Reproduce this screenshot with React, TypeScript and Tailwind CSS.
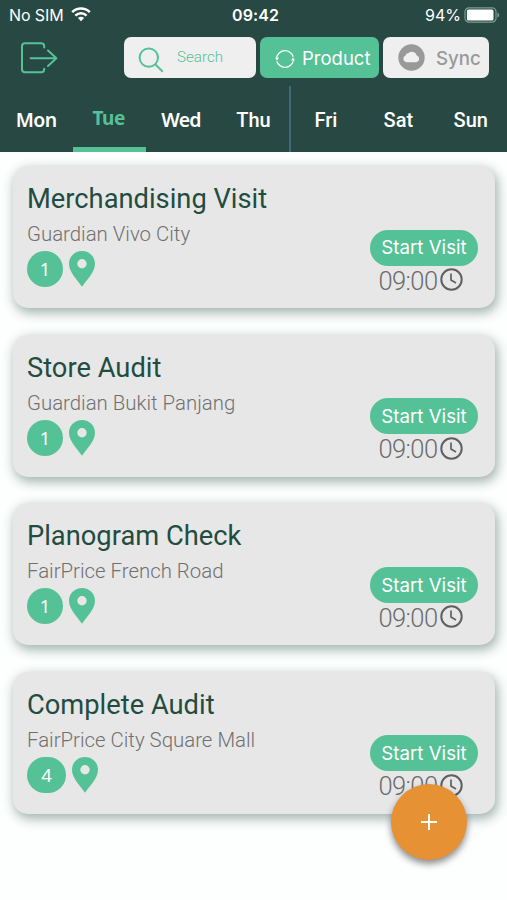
import React from "react";

const days = [
  { name: "Mon", style: "font-['Noto_Sans'] font-semibold text-[19.5px] tracking-[-0.6px] text-white" },
  { name: "Tue", style: "font-['Noto_Sans'] font-bold text-[19px] tracking-[-0.4px] text-[#55c197]" },
  { name: "Wed", style: "font-['Noto_Sans'] font-semibold text-[19.5px] tracking-[-0.8px] text-white" },
  { name: "Thu", style: "font-['Roboto'] font-medium text-[20px] text-white" },
  { name: "Fri", style: "font-['Roboto'] font-medium text-[20px] text-white" },
  { name: "Sat", style: "font-['Roboto'] font-medium text-[20px] text-white" },
  { name: "Sun", style: "font-['Roboto'] font-medium text-[20px] text-white" },
];

const visits = [
  { title: "Merchandising Visit", store: "Guardian Vivo City", count: 1 },
  { title: "Store Audit", store: "Guardian Bukit Panjang", count: 1 },
  { title: "Planogram Check", store: "FairPrice French Road", count: 1 },
  { title: "Complete Audit", store: "FairPrice City Square Mall", count: 4 },
];

const WifiIcon = () => (
  <svg className="mb-0.5 ml-[7px] h-[15px] w-5" viewBox="0 0 20 15" fill="none" stroke="white">
    <path d="M1.2 5.2a12.6 12.6 0 0 1 17.6 0" strokeWidth="2.5" />
    <path d="M4.4 8.6a8 8 0 0 1 11.2 0" strokeWidth="2.4" />
    <path d="M10 14.2 6.9 11.1a4.4 4.4 0 0 1 6.2 0z" fill="white" stroke="none" />
  </svg>
);

const BatteryIcon = () => (
  <svg className="ml-[3px] h-4 w-9" viewBox="0 0 36 16">
    <rect x="1" y="0.8" width="31" height="14.4" rx="4" fill="none" stroke="#7d9b92" strokeWidth="1.2" />
    <rect x="2.9" y="2.6" width="26.6" height="10.8" rx="1.5" fill="white" />
    <path d="M33.4 5.4v5.2c2.4-.9 2.4-4.3 0-5.2z" fill="#7d9b92" />
  </svg>
);

const LogoutIcon = () => (
  <svg
    className="h-8 w-[38px]"
    viewBox="0 0 38 32"
    fill="none"
    stroke="#55c197"
    strokeWidth="2"
    strokeLinecap="round"
    strokeLinejoin="round"
  >
    <path d="M24.2 5.6V4.2Q24.2 1.2 21.2 1.2H5Q2 1.2 2 4.2V27.2Q2 30.2 5 30.2H21.2Q24.2 30.2 24.2 27.2V26.8" />
    <path d="M10.5 16.2H36M28 8.4l8.4 7.8-8.4 7.8" />
  </svg>
);

const SearchIcon = () => (
  <svg className="h-[26px] w-[26px]" viewBox="0 0 26 26" fill="none" stroke="#55c197" strokeWidth="2">
    <circle cx="10.8" cy="10.6" r="9.2" />
    <path d="m17.2 17.2 7.6 7.6" />
  </svg>
);

const RefreshIcon = () => (
  <svg className="mt-0.5 h-5 w-5" viewBox="0 0 20 20" fill="none" stroke="white" strokeWidth="1.3">
    <path d="M1.6 9a8.5 8.5 0 0 1 16.6-1.2M18.4 11a8.5 8.5 0 0 1-16.6 1.2" />
    <path d="M0 8.8h4L2 11.6zM16 11.2h4L18 8.4z" fill="white" stroke="none" />
  </svg>
);

const CloudIcon = () => (
  <svg className="h-[27px] w-[27px]" viewBox="0 0 27 27">
    <circle cx="13.5" cy="13.5" r="13.2" fill="#999999" />
    <path
      d="M8.4 18.2a3.5 3.5 0 0 1-.9-6.7 3.2 3.2 0 0 1 3-2.4 5 5 0 0 1 8.3 2.5 3.4 3.4 0 0 1-.4 6.6z"
      fill="#f0f0f0"
    />
  </svg>
);

const PinIcon = () => (
  <svg className="ml-1.5 h-9 w-[26px]" viewBox="0 0 26 36">
    <path
      fillRule="evenodd"
      d="M13 0C5.6 0 0 5.6 0 12.8 0 21.5 8.5 29 13 35.8 17.5 29 26 21.5 26 12.8 26 5.6 20.4 0 13 0zM13 8.1a4.7 4.7 0 1 1 0 9.4 4.7 4.7 0 0 1 0-9.4z"
      fill="#55c197"
    />
  </svg>
);

const ClockIcon = () => (
  <svg className="mb-0.5 ml-[3px] h-[23px] w-[23px]" viewBox="0 0 23 23" fill="none" stroke="#606060">
    <circle cx="11.5" cy="11.5" r="10.2" strokeWidth="2" />
    <path d="M11 5.5v6.6l5 3" strokeWidth="1.7" />
  </svg>
);

type VisitProps = { title: string; store: string; count: number };

const VisitCard = ({ title, store, count }: VisitProps) => (
  <div className="flex h-[142px] w-[482px] justify-between rounded-[15px] bg-[#e7e7e7] pl-[14px] pr-[17px] shadow-[2px_4px_11px_1px_rgba(40,82,70,0.42)]">
    <div className="flex flex-col pt-[17px]">
      <h2 className="font-['Roboto'] text-[27.3px] leading-8 text-[#234c41]">{title}</h2>
      <p className="mt-[7px] font-['Roboto'] text-[20.4px] leading-6 font-light text-[#707070]">{store}</p>
      <div className="mt-[5px] flex items-center">
        <span
          className={
            count > 1
              ? "flex h-9 w-[39px] items-center justify-center rounded-full bg-[#55c197] font-['Noto_Sans'] text-[18.5px] text-white"
              : "flex h-9 w-9 items-center justify-center rounded-full bg-[#55c197] font-['Noto_Sans'] text-[18.5px] text-white"
          }
        >
          {count}
        </span>
        <PinIcon />
      </div>
    </div>
    <div className="flex flex-col items-center pt-[63.5px]">
      <button className="h-9 w-[108px] rounded-full bg-[#55c197] pt-0.5 font-['Inter'] text-[18.7px] text-white">
        Start Visit
      </button>
      <div className="mt-[3px] mr-[6px] flex h-6 items-center">
        <span className="font-['Roboto'] text-[25.5px] leading-6 font-light tracking-[-0.6px] text-[#6c6c6c]">09:00</span>
        <ClockIcon />
      </div>
    </div>
  </div>
);

const App = () => {
  return (
    <div className="relative h-[900px] w-[507px] overflow-hidden bg-[#fdfefe]">
      <header className="flex h-[152px] flex-col bg-[#284843] text-white">
        <div className="grid h-[30px] grid-cols-3 items-center pl-[9px] pr-[7px] font-['Inter'] text-[16px]">
          <div className="flex items-center">
            <span className="tracking-[-0.1px]">No SIM</span>
            <WifiIcon />
          </div>
          <span className="pl-0.5 text-center font-semibold tracking-[0.1px]">09:42</span>
          <div className="flex items-center justify-end">
            <span>94%</span>
            <BatteryIcon />
          </div>
        </div>
        <div className="mt-[7px] flex h-[41px] items-center pl-5">
          <LogoutIcon />
          <div className="ml-[66px] flex h-[41px] w-[132px] items-center rounded-[7px] bg-[#efefef] pt-1 pl-[14px]">
            <SearchIcon />
            <span className="mb-[5px] ml-[13px] font-['Roboto'] text-[15.2px] font-light text-[#55c197]">Search</span>
          </div>
          <button className="ml-1 flex h-[41px] w-[119px] items-center rounded-[7px] bg-[#55c197] pl-[15px] font-['Inter'] text-[18.5px]">
            <RefreshIcon />
            <span className="mt-0.5 ml-[7px]">Product</span>
          </button>
          <button className="ml-1 flex h-[41px] w-[106px] items-center rounded-[7px] bg-[#efefef] pl-[15px] font-['Inter'] text-[18.7px] font-medium text-[#999999]">
            <CloudIcon />
            <span className="mt-[3px] ml-[11px]">Sync</span>
          </button>
        </div>
        <nav className="mt-2 grid h-[66px] w-[508px] grid-cols-7 pl-px">
          {days.map((day) => (
            <div
              key={day.name}
              className={
                day.name === "Tue"
                  ? "flex items-center justify-center border-b-[5px] border-[#55c197] pt-1 pr-0.5"
                  : day.name === "Thu"
                    ? "flex items-center justify-center border-r-2 border-[#3f6c78] pt-px"
                    : "flex items-center justify-center pt-px pr-0.5"
              }
            >
              <span className={day.style}>{day.name}</span>
            </div>
          ))}
        </nav>
      </header>
      <main className="flex flex-col gap-[26.6px] pt-[14px] pl-[13px]">
        {visits.map((visit) => (
          <VisitCard key={visit.title} {...visit} />
        ))}
      </main>
      <button className="absolute top-[784px] left-[391px] flex h-[76px] w-[76px] items-center justify-center rounded-full bg-[#e59134] shadow-[0_4px_7px_rgba(0,0,0,0.45)]">
        <svg className="mr-px h-4 w-4" viewBox="0 0 16 16" stroke="white" strokeWidth="2">
          <path d="M8 0v16M0 8h16" />
        </svg>
      </button>
    </div>
  );
};

export default App;
